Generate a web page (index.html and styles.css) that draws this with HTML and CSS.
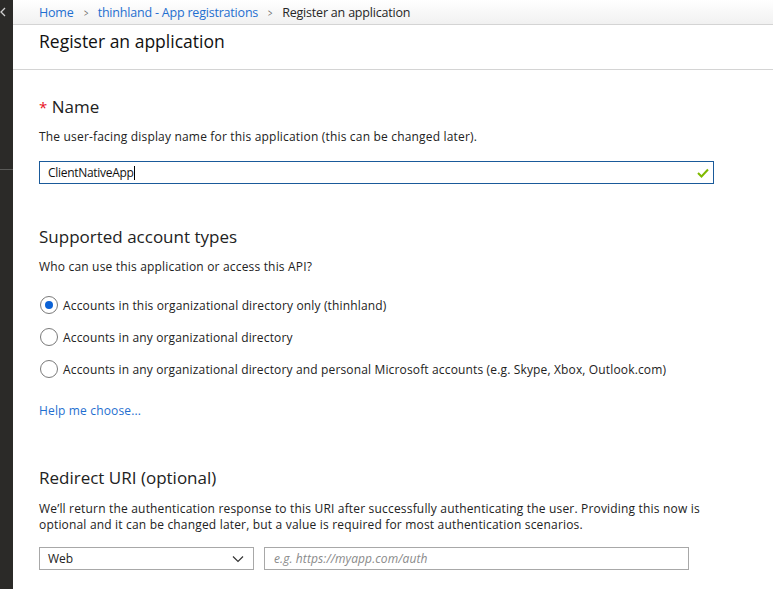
FILE: index.html
```html
<!DOCTYPE html>
<html>
<head>
<meta charset="utf-8">
<link rel="stylesheet" href="styles.css">
</head>
<body>
<div class="page">
  <div class="rail">
    <svg class="rail-chev" width="8" height="12" viewBox="0 0 8 12"><path d="M6 2 L2 6 L6 10" fill="none" stroke="#d0d0d0" stroke-width="1.3"/></svg>
    <div class="rail-line"></div>
  </div>
  <div class="main">
    <div class="crumbs">
      <a class="crumb-link">Home</a>
      <span class="sep">&gt;</span>
      <a class="crumb-link">thinhland - App registrations</a>
      <span class="sep">&gt;</span>
      <span class="crumb-cur">Register an application</span>
    </div>
    <div class="header">
      <h1 class="title">Register an application</h1>
    </div>
    <div class="content">
      <h2 class="sec-title first"><span class="req">*</span> Name</h2>
      <p class="desc">The user-facing display name for this application (this can be changed later).</p>
      <div class="name-input">
        <span class="val">ClientNativeApp</span><span class="caret"></span>
        <svg class="check" width="12" height="10" viewBox="0 0 12 10"><path d="M1 5 L4.5 8.5 L11 1.5" fill="none" stroke="#7fba00" stroke-width="2"/></svg>
      </div>

      <h2 class="sec-title s2">Supported account types</h2>
      <p class="desc">Who can use this application or access this API?</p>
      <div class="radios">
        <div class="radio-row"><span class="radio on"></span><span>Accounts in this organizational directory only (thinhland)</span></div>
        <div class="radio-row"><span class="radio"></span><span>Accounts in any organizational directory</span></div>
        <div class="radio-row"><span class="radio"></span><span>Accounts in any organizational directory and personal Microsoft accounts (e.g. Skype, Xbox, Outlook.com)</span></div>
      </div>
      <a class="help">Help me choose...</a>

      <h2 class="sec-title s3">Redirect URI (optional)</h2>
      <p class="desc para">We’ll return the authentication response to this URI after successfully authenticating the user. Providing this now is optional and it can be changed later, but a value is required for most authentication scenarios.</p>
      <div class="uri-row">
        <div class="select"><span>Web</span>
          <svg width="12" height="8" viewBox="0 0 12 8"><path d="M1 1.5 L6 6.5 L11 1.5" fill="none" stroke="#333" stroke-width="1.2"/></svg>
        </div>
        <div class="uri-input">e.g. https://myapp.com/auth</div>
      </div>
    </div>
  </div>
</div>
</body>
</html>
```
FILE: styles.css
```css
html, body {
  margin: 0;
  padding: 0;
  background: #fff;
}
body {
  font-family: "Segoe UI", "Open Sans", "Noto Sans", sans-serif;
  color: #1f1f1f;
  width: 773px;
  height: 589px;
  overflow: hidden;
}
.page {
  display: flex;
  height: 589px;
}
.rail {
  width: 13px;
  flex: none;
  background: #2b2a28;
  position: relative;
}
.rail-chev {
  position: absolute;
  left: -1px;
  top: 6px;
}
.rail-line {
  position: absolute;
  left: 0;
  right: 0;
  top: 169px;
  height: 1px;
  background: #5a5a58;
}
.main {
  flex: 1;
  min-width: 0;
}
.crumbs {
  height: 25px;
  box-sizing: border-box;
  border-bottom: 1px solid #d4d4d4;
  background: linear-gradient(#ffffff, #f1f1f1);
  padding-left: 26px;
  display: flex;
  align-items: center;
  font-size: 12.5px;
  letter-spacing: -0.2px;
  white-space: nowrap;
}
.crumb-link {
  color: #1f6fd0;
}
.sep {
  color: #666;
  margin: 0 9px;
  font-size: 11px;
  transform: scaleX(0.7);
  display: inline-block;
}
.crumb-cur {
  color: #262626;
}
.header {
  height: 45px;
  box-sizing: border-box;
  border-bottom: 1px solid #d4d4d4;
  padding-left: 26px;
  padding-top: 4px;
}
.title {
  margin: 0;
  font-size: 17.5px;
  font-weight: 400;
  line-height: 24px;
  color: #111;
}
.content {
  padding-left: 26px;
  padding-top: 25px;
}
.sec-title {
  margin: 0;
  font-size: 17px;
  font-weight: 400;
  line-height: 24px;
  color: #222;
}
.req {
  color: #e81123;
  font-size: 15px;
}
.sec-title.s2 { margin-top: 41px; }
.sec-title.s3 { margin-top: 47px; }
.desc {
  margin: 10px 0 0;
  font-size: 12px;
  line-height: 16px;
  color: #222;
  letter-spacing: 0.18px;
}
.desc.para {
  width: 670px;
  margin-top: 11px;
}
.name-input {
  margin-top: 16px;
  width: 675px;
  height: 23px;
  box-sizing: border-box;
  border: 1px solid #1a5a9a;
  display: flex;
  align-items: center;
  padding-left: 8px;
  padding-right: 4px;
  font-size: 12px;
  letter-spacing: -0.3px;
  color: #111;
}
.caret {
  width: 1px;
  height: 14px;
  background: #000;
}
.check {
  margin-left: auto;
}
.radios {
  margin-top: 21px;
  display: flex;
  flex-direction: column;
  gap: 14px;
}
.radio-row {
  display: flex;
  align-items: center;
  height: 18px;
  gap: 5px;
  font-size: 12px;
  letter-spacing: 0.15px;
  color: #222;
  white-space: nowrap;
}
.radio {
  width: 18px;
  height: 18px;
  box-sizing: border-box;
  border: 1px solid #7a7a7a;
  border-radius: 50%;
  display: flex;
  align-items: center;
  justify-content: center;
  flex: none;
  margin-left: 1px;
}
.radio.on::after {
  content: "";
  width: 8px;
  height: 8px;
  border-radius: 50%;
  background: #0b62d6;
}
.help {
  display: block;
  margin-top: 25px;
  font-size: 12px;
  line-height: 16px;
  color: #1f6fd0;
  letter-spacing: 0.15px;
}
.uri-row {
  margin-top: 14px;
  display: flex;
  gap: 10px;
}
.select {
  width: 215px;
  height: 23px;
  box-sizing: border-box;
  border: 1px solid #a8a8a8;
  display: flex;
  align-items: center;
  justify-content: space-between;
  padding: 0 9px 0 8px;
  font-size: 12px;
  color: #222;
}
.uri-input {
  width: 425px;
  height: 23px;
  box-sizing: border-box;
  border: 1px solid #a8a8a8;
  display: flex;
  align-items: center;
  padding-left: 9px;
  font-size: 12px;
  font-style: italic;
  color: #8a8a8a;
  letter-spacing: 0.1px;
}
```
